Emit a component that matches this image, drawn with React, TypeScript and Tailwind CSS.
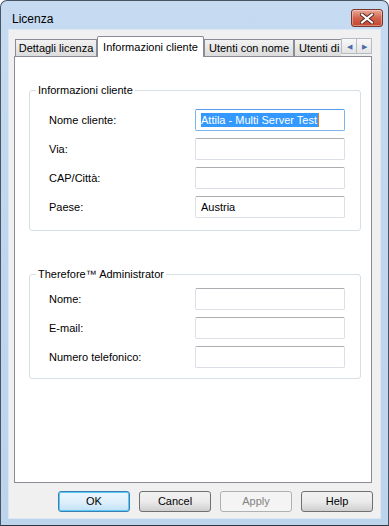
import React from "react";

const font = { fontFamily: '"Liberation Sans", Arial, sans-serif' };

function TextBox({ value, focused }: { value?: string; focused?: boolean }) {
  return (
    <div
      className={
        "w-[150px] h-[22px] bg-white rounded-[2px] border flex items-center pl-[5px] text-[11px] " +
        (focused
          ? "border-[#7eb4ea] border-t-[#569de5]"
          : "border-[#dbdfe6] border-t-[#abadb3]")
      }
    >
      {focused && value ? (
        <span className="bg-[#3399ff] text-white leading-[14px] pr-[1px] border-r border-[#e07b1f]">
          {value}
        </span>
      ) : (
        <span className="text-black">{value}</span>
      )}
    </div>
  );
}

function Row({ label, value, focused }: { label: string; value?: string; focused?: boolean }) {
  return (
    <div className="flex items-center h-[22px]">
      <div className="w-[165px] pl-[19px] text-[11px] text-black">{label}</div>
      <TextBox value={value} focused={focused} />
    </div>
  );
}

function Group({ title, children, pt, pb }: { title: string; children: React.ReactNode; pt: string; pb: string }) {
  return (
    <fieldset className={"border border-[#d5dfe5] rounded-[3px] ml-[14px] mr-[10px] " + pt + " " + pb}>
      <legend className="ml-[6px] px-[2px] text-[11px] text-black leading-[13px]">{title}</legend>
      <div className="flex flex-col gap-[7px]">{children}</div>
    </fieldset>
  );
}

function Tab({ label, selected, clipped, width }: { label: string; selected?: boolean; clipped?: boolean; width: string }) {
  if (selected) {
    return (
      <div
        className={
          "relative z-10 -mb-px h-[21px] bg-white border border-b-0 border-[#898c95] rounded-t-[2px] flex items-center justify-center text-[11px] text-black shrink-0 " +
          width
        }
      >
        {label}
      </div>
    );
  }
  return (
    <div
      className={
        "h-[17px] border border-b-0 border-[#898c95] bg-gradient-to-b from-[#f2f2f2] to-[#dcdcdc] flex items-center text-[11px] text-black overflow-hidden whitespace-nowrap shrink-0 " +
        (clipped ? "border-r-0 pl-[4px] " : "justify-center ") +
        width
      }
    >
      {label}
    </div>
  );
}

function DlgButton({ label, primary, disabled }: { label: string; primary?: boolean; disabled?: boolean }) {
  let cls =
    "w-[72px] h-[21px] rounded-[3px] border flex items-center justify-center text-[11px] ";
  if (disabled) cls += "border-[#adb2b5] bg-[#f4f4f4] text-[#838383]";
  else if (primary)
    cls += "border-[#3c7fb1] bg-gradient-to-b from-[#eaf6fd] via-[#e0f0fb] to-[#bfe2f7] text-black shadow-[inset_0_0_0_1px_#5bc7f7]";
  else cls += "border-[#707070] bg-gradient-to-b from-[#f2f2f2] via-[#ebebeb] to-[#cfcfcf] text-black";
  return <div className={cls}>{label}</div>;
}

export default function App() {
  return (
    <div className="w-[389px] h-[526px] bg-white" style={font}>
      <div className="w-[389px] h-[526px] flex flex-col bg-[#bcd4ec] border border-[#4a5563] border-b-[#2d3540] rounded-t-[7px] px-[7px] pb-[6px] bg-gradient-to-b from-[#c6dbf1] via-[#bfd6ee] to-[#bcd4ec]">
        <div className="h-[28px] flex items-start shrink-0">
          <div className="pl-[4px] pt-[11px] text-[12px] text-black leading-[14px]">Licenza</div>
          <div className="ml-auto mt-[8px] -mr-[2px] w-[32px] h-[18px] rounded-[3px] border border-[#76362b] bg-gradient-to-b from-[#e9a99b] via-[#d3634d] to-[#c4452f] flex items-center justify-center shadow-[inset_0_0_0_1px_rgba(255,255,255,0.35)]">
            <svg width="14" height="11" viewBox="0 0 14 11">
              <path d="M2 1.5 L12 9.5 M12 1.5 L2 9.5" stroke="#5a2a22" strokeWidth="4" strokeLinecap="square" />
              <path d="M2 1.5 L12 9.5 M12 1.5 L2 9.5" stroke="#ffffff" strokeWidth="2" strokeLinecap="square" />
            </svg>
          </div>
        </div>

        <div className="flex-1 flex flex-col bg-[#f0f0f0] border border-[#dce7f3] min-h-0">
          <div className="flex items-end h-[20px] mt-[6px] ml-[5px] mr-[8px] shrink-0">
            <div className="w-[2px]" />
            <Tab label="Dettagli licenza" width="w-[82px]" />
            <Tab label="Informazioni cliente" selected width="w-[107px]" />
            <Tab label="Utenti con nome" width="w-[90px]" />
            <Tab label="Utenti di" clipped width="w-[47px]" />
            <div className="self-start mt-[2px] flex shrink-0">
              <div className="w-[16px] h-[16px] border border-[#b7bcc3] bg-gradient-to-b from-[#f8f8f8] to-[#e4e4e4] flex items-center justify-center text-[#4a6aa5] text-[7px] leading-none">
                ◀
              </div>
              <div className="w-[15px] h-[16px] border border-l-0 border-[#b7bcc3] bg-gradient-to-b from-[#f8f8f8] to-[#e4e4e4] flex items-center justify-center text-[#4a6aa5] text-[7px] leading-none">
                ▶
              </div>
            </div>
          </div>

          <div className="flex-1 ml-[5px] mr-[8px] bg-white border border-[#898c95] pt-[27px]">
            <Group title="Informazioni cliente" pt="pt-[12px]" pb="pb-[12px]">
              <Row label="Nome cliente:" value="Attila - Multi Server Test" focused />
              <Row label="Via:" />
              <Row label="CAP/Città:" />
              <Row label="Paese:" value="Austria" />
            </Group>
            <div className="h-[37px]" />
            <Group title="Therefore™ Administrator" pt="pt-[7px]" pb="pb-[10px]">
              <Row label="Nome:" />
              <Row label="E-mail:" />
              <Row label="Numero telefonico:" />
            </Group>
          </div>

          <div className="flex justify-end gap-[9px] mt-[8px] mb-[6px] mr-[7px] shrink-0">
            <DlgButton label="OK" primary />
            <DlgButton label="Cancel" />
            <DlgButton label="Apply" disabled />
            <DlgButton label="Help" />
          </div>
        </div>
      </div>
    </div>
  );
}
